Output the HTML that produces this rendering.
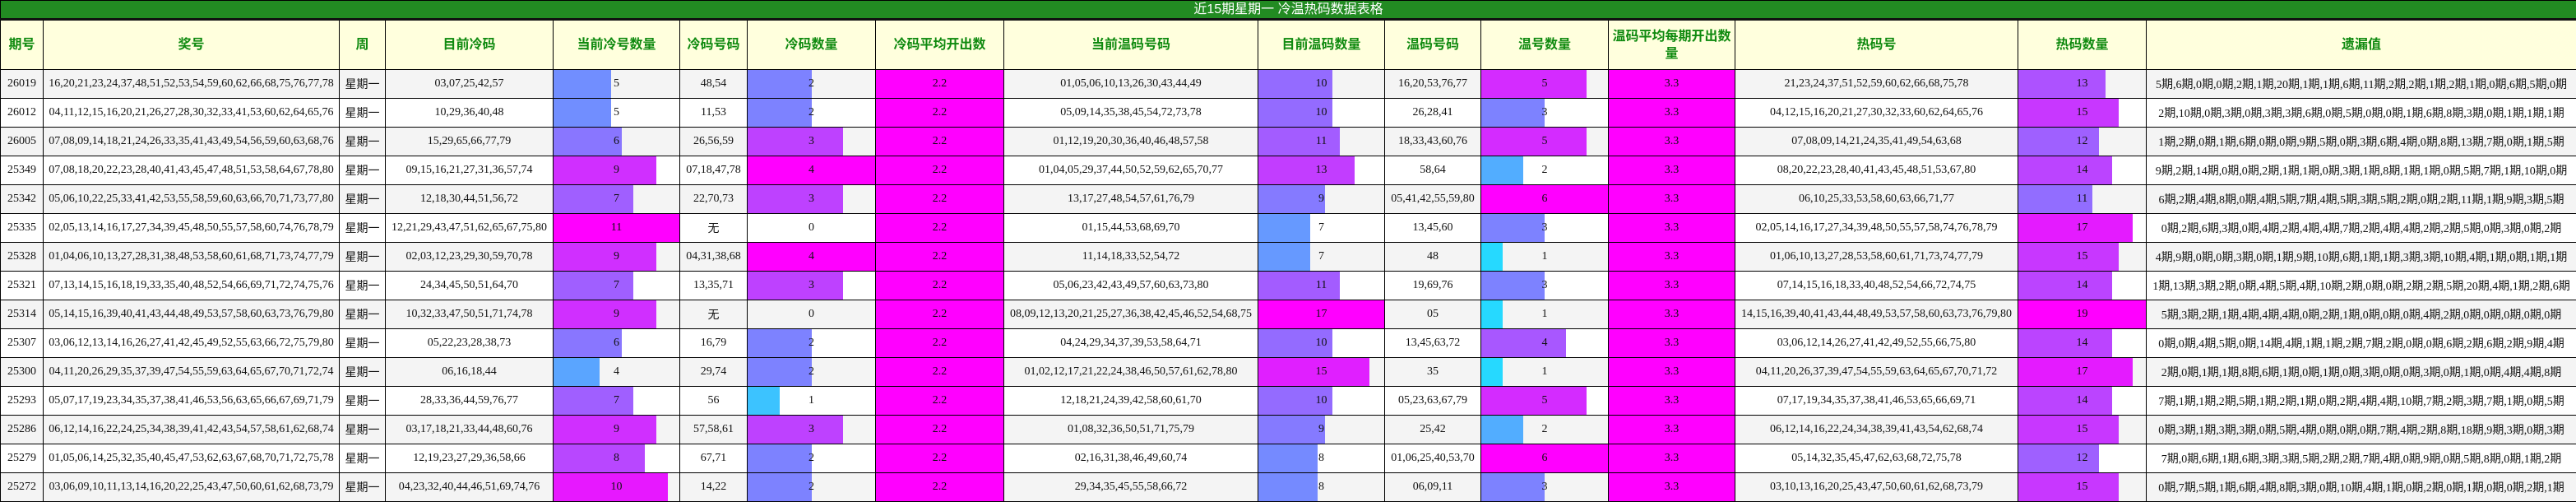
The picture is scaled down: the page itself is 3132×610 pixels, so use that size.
<!DOCTYPE html>
<html><head><meta charset="utf-8">
<style>
html,body{margin:0;padding:0;background:#fff;}
body{width:3132px;height:610px;overflow:hidden;}
table{border-collapse:collapse;table-layout:fixed;width:3132px;font-family:"Liberation Serif","Noto Sans CJK SC",serif;font-size:14px;color:#111;}
td,th{border:1px solid #000;padding:0;text-align:center;white-space:nowrap;overflow:hidden;}
.t td{background:#228b22;color:#fff;height:21px;border-bottom:3px solid #111;font-family:"Liberation Sans","Noto Sans CJK SC",sans-serif;font-size:16px;line-height:21px;}
.h th{background:#ffffdd;color:#0f8a0f;height:59px;font-family:"Liberation Sans","Noto Sans CJK SC",sans-serif;font-size:16px;font-weight:bold;white-space:normal;line-height:21px;}
tr.r td{height:34px;}
tr.r:nth-of-type(odd) td{background:#f4f4f4;}
tr.r:nth-of-type(even) td{background:#fff;}
td.b{position:relative;}
td.b i{position:absolute;left:0;top:0;bottom:0;display:block;}
td.b span{position:relative;}
tr.r td.m{background:#ff00ff;}
</style></head><body>
<table>
<colgroup><col style="width:52px"><col style="width:360px"><col style="width:56px"><col style="width:204px"><col style="width:154px"><col style="width:82px"><col style="width:156px"><col style="width:156px"><col style="width:309px"><col style="width:154px"><col style="width:117px"><col style="width:155px"><col style="width:154px"><col style="width:344px"><col style="width:156px"><col style="width:523px"></colgroup>
<tr class="t"><td colspan="16">近15期星期一 冷温热码数据表格</td></tr>
<tr class="h"><th>期号</th><th>奖号</th><th>周</th><th>目前冷码</th><th>当前冷号数量</th><th>冷码号码</th><th>冷码数量</th><th>冷码平均开出数</th><th>当前温码号码</th><th>目前温码数量</th><th>温码号码</th><th>温号数量</th><th>温码平均每期开出数量</th><th>热码号</th><th>热码数量</th><th>遗漏值</th></tr>

<tr class="r"><td>26019</td><td>16,20,21,23,24,37,48,51,52,53,54,59,60,62,66,68,75,76,77,78</td><td>星期一</td><td>03,07,25,42,57</td><td class="b"><i style="width:45.5%;background:rgb(113,142,255)"></i><span>5</span></td><td>48,54</td><td class="b"><i style="width:50%;background:rgb(125,130,255)"></i><span>2</span></td><td class="m">2.2</td><td>01,05,06,10,13,26,30,43,44,49</td><td class="b"><i style="width:58.8%;background:rgb(148,107,255)"></i><span>10</span></td><td>16,20,53,76,77</td><td class="b"><i style="width:83.3%;background:rgb(212,43,255)"></i><span>5</span></td><td class="m">3.3</td><td>21,23,24,37,51,52,59,60,62,66,68,75,78</td><td class="b"><i style="width:68.4%;background:rgb(173,82,255)"></i><span>13</span></td><td>5期,6期,0期,0期,2期,1期,20期,1期,1期,6期,11期,2期,2期,1期,2期,1期,0期,6期,5期,0期</td></tr>

<tr class="r"><td>26012</td><td>04,11,12,15,16,20,21,26,27,28,30,32,33,41,53,60,62,64,65,76</td><td>星期一</td><td>10,29,36,40,48</td><td class="b"><i style="width:45.5%;background:rgb(113,142,255)"></i><span>5</span></td><td>11,53</td><td class="b"><i style="width:50%;background:rgb(125,130,255)"></i><span>2</span></td><td class="m">2.2</td><td>05,09,14,35,38,45,54,72,73,78</td><td class="b"><i style="width:58.8%;background:rgb(148,107,255)"></i><span>10</span></td><td>26,28,41</td><td class="b"><i style="width:50%;background:rgb(125,130,255)"></i><span>3</span></td><td class="m">3.3</td><td>04,12,15,16,20,21,27,30,32,33,60,62,64,65,76</td><td class="b"><i style="width:78.9%;background:rgb(200,55,255)"></i><span>15</span></td><td>2期,10期,0期,3期,0期,3期,3期,6期,0期,5期,0期,0期,1期,6期,8期,3期,0期,1期,1期,1期</td></tr>

<tr class="r"><td>26005</td><td>07,08,09,14,18,21,24,26,33,35,41,43,49,54,56,59,60,63,68,76</td><td>星期一</td><td>15,29,65,66,77,79</td><td class="b"><i style="width:54.5%;background:rgb(137,118,255)"></i><span>6</span></td><td>26,56,59</td><td class="b"><i style="width:75%;background:rgb(190,65,255)"></i><span>3</span></td><td class="m">2.2</td><td>01,12,19,20,30,36,40,46,48,57,58</td><td class="b"><i style="width:64.7%;background:rgb(163,92,255)"></i><span>11</span></td><td>18,33,43,60,76</td><td class="b"><i style="width:83.3%;background:rgb(212,43,255)"></i><span>5</span></td><td class="m">3.3</td><td>07,08,09,14,21,24,35,41,49,54,63,68</td><td class="b"><i style="width:63.2%;background:rgb(159,96,255)"></i><span>12</span></td><td>1期,2期,0期,1期,6期,0期,0期,9期,5期,0期,3期,6期,4期,0期,8期,13期,7期,0期,1期,5期</td></tr>

<tr class="r"><td>25349</td><td>07,08,18,20,22,23,28,40,41,43,45,47,48,51,53,58,64,67,78,80</td><td>星期一</td><td>09,15,16,21,27,31,36,57,74</td><td class="b"><i style="width:81.8%;background:rgb(208,47,255)"></i><span>9</span></td><td>07,18,47,78</td><td class="b"><i style="width:100%;background:rgb(255,0,255)"></i><span>4</span></td><td class="m">2.2</td><td>01,04,05,29,37,44,50,52,59,62,65,70,77</td><td class="b"><i style="width:76.5%;background:rgb(194,61,255)"></i><span>13</span></td><td>58,64</td><td class="b"><i style="width:33.3%;background:rgb(82,173,255)"></i><span>2</span></td><td class="m">3.3</td><td>08,20,22,23,28,40,41,43,45,48,51,53,67,80</td><td class="b"><i style="width:73.7%;background:rgb(187,68,255)"></i><span>14</span></td><td>9期,2期,14期,0期,0期,2期,1期,1期,0期,3期,1期,8期,1期,1期,0期,5期,7期,1期,10期,0期</td></tr>

<tr class="r"><td>25342</td><td>05,06,10,22,25,33,41,42,53,55,58,59,60,63,66,70,71,73,77,80</td><td>星期一</td><td>12,18,30,44,51,56,72</td><td class="b"><i style="width:63.6%;background:rgb(160,95,255)"></i><span>7</span></td><td>22,70,73</td><td class="b"><i style="width:75%;background:rgb(190,65,255)"></i><span>3</span></td><td class="m">2.2</td><td>13,17,27,48,54,57,61,76,79</td><td class="b"><i style="width:52.9%;background:rgb(133,122,255)"></i><span>9</span></td><td>05,41,42,55,59,80</td><td class="b"><i style="width:100%;background:rgb(255,0,255)"></i><span>6</span></td><td class="m">3.3</td><td>06,10,25,33,53,58,60,63,66,71,77</td><td class="b"><i style="width:57.9%;background:rgb(146,109,255)"></i><span>11</span></td><td>6期,2期,4期,8期,0期,4期,5期,7期,4期,5期,3期,5期,2期,0期,2期,11期,1期,9期,3期,5期</td></tr>

<tr class="r"><td>25335</td><td>02,05,13,14,16,17,27,34,39,45,48,50,55,57,58,60,74,76,78,79</td><td>星期一</td><td>12,21,29,43,47,51,62,65,67,75,80</td><td class="b"><i style="width:100%;background:rgb(255,0,255)"></i><span>11</span></td><td>无</td><td class="b"><span>0</span></td><td class="m">2.2</td><td>01,15,44,53,68,69,70</td><td class="b"><i style="width:41.2%;background:rgb(102,153,255)"></i><span>7</span></td><td>13,45,60</td><td class="b"><i style="width:50%;background:rgb(125,130,255)"></i><span>3</span></td><td class="m">3.3</td><td>02,05,14,16,17,27,34,39,48,50,55,57,58,74,76,78,79</td><td class="b"><i style="width:89.5%;background:rgb(228,27,255)"></i><span>17</span></td><td>0期,2期,6期,3期,0期,4期,2期,4期,4期,7期,2期,4期,4期,2期,2期,5期,0期,3期,0期,2期</td></tr>

<tr class="r"><td>25328</td><td>01,04,06,10,13,27,28,31,38,48,53,58,60,61,68,71,73,74,77,79</td><td>星期一</td><td>02,03,12,23,29,30,59,70,78</td><td class="b"><i style="width:81.8%;background:rgb(208,47,255)"></i><span>9</span></td><td>04,31,38,68</td><td class="b"><i style="width:100%;background:rgb(255,0,255)"></i><span>4</span></td><td class="m">2.2</td><td>11,14,18,33,52,54,72</td><td class="b"><i style="width:41.2%;background:rgb(102,153,255)"></i><span>7</span></td><td>48</td><td class="b"><i style="width:16.7%;background:rgb(38,217,255)"></i><span>1</span></td><td class="m">3.3</td><td>01,06,10,13,27,28,53,58,60,61,71,73,74,77,79</td><td class="b"><i style="width:78.9%;background:rgb(200,55,255)"></i><span>15</span></td><td>4期,9期,0期,0期,3期,0期,1期,9期,10期,6期,1期,1期,3期,3期,10期,4期,1期,0期,1期,1期</td></tr>

<tr class="r"><td>25321</td><td>07,13,14,15,16,18,19,33,35,40,48,52,54,66,69,71,72,74,75,76</td><td>星期一</td><td>24,34,45,50,51,64,70</td><td class="b"><i style="width:63.6%;background:rgb(160,95,255)"></i><span>7</span></td><td>13,35,71</td><td class="b"><i style="width:75%;background:rgb(190,65,255)"></i><span>3</span></td><td class="m">2.2</td><td>05,06,23,42,43,49,57,60,63,73,80</td><td class="b"><i style="width:64.7%;background:rgb(163,92,255)"></i><span>11</span></td><td>19,69,76</td><td class="b"><i style="width:50%;background:rgb(125,130,255)"></i><span>3</span></td><td class="m">3.3</td><td>07,14,15,16,18,33,40,48,52,54,66,72,74,75</td><td class="b"><i style="width:73.7%;background:rgb(187,68,255)"></i><span>14</span></td><td>1期,13期,3期,2期,0期,4期,5期,4期,10期,2期,0期,0期,2期,2期,5期,20期,4期,1期,2期,6期</td></tr>

<tr class="r"><td>25314</td><td>05,14,15,16,39,40,41,43,44,48,49,53,57,58,60,63,73,76,79,80</td><td>星期一</td><td>10,32,33,47,50,51,71,74,78</td><td class="b"><i style="width:81.8%;background:rgb(208,47,255)"></i><span>9</span></td><td>无</td><td class="b"><span>0</span></td><td class="m">2.2</td><td>08,09,12,13,20,21,25,27,36,38,42,45,46,52,54,68,75</td><td class="b"><i style="width:100%;background:rgb(255,0,255)"></i><span>17</span></td><td>05</td><td class="b"><i style="width:16.7%;background:rgb(38,217,255)"></i><span>1</span></td><td class="m">3.3</td><td>14,15,16,39,40,41,43,44,48,49,53,57,58,60,63,73,76,79,80</td><td class="b"><i style="width:100%;background:rgb(255,0,255)"></i><span>19</span></td><td>5期,3期,2期,1期,4期,4期,4期,0期,2期,1期,0期,0期,0期,4期,2期,0期,0期,0期,0期,0期</td></tr>

<tr class="r"><td>25307</td><td>03,06,12,13,14,16,26,27,41,42,45,49,52,55,63,66,72,75,79,80</td><td>星期一</td><td>05,22,23,28,38,73</td><td class="b"><i style="width:54.5%;background:rgb(137,118,255)"></i><span>6</span></td><td>16,79</td><td class="b"><i style="width:50%;background:rgb(125,130,255)"></i><span>2</span></td><td class="m">2.2</td><td>04,24,29,34,37,39,53,58,64,71</td><td class="b"><i style="width:58.8%;background:rgb(148,107,255)"></i><span>10</span></td><td>13,45,63,72</td><td class="b"><i style="width:66.7%;background:rgb(168,87,255)"></i><span>4</span></td><td class="m">3.3</td><td>03,06,12,14,26,27,41,42,49,52,55,66,75,80</td><td class="b"><i style="width:73.7%;background:rgb(187,68,255)"></i><span>14</span></td><td>0期,0期,4期,5期,0期,14期,4期,1期,1期,2期,7期,2期,0期,0期,6期,2期,6期,2期,9期,4期</td></tr>

<tr class="r"><td>25300</td><td>04,11,20,26,29,35,37,39,47,54,55,59,63,64,65,67,70,71,72,74</td><td>星期一</td><td>06,16,18,44</td><td class="b"><i style="width:36.4%;background:rgb(90,165,255)"></i><span>4</span></td><td>29,74</td><td class="b"><i style="width:50%;background:rgb(125,130,255)"></i><span>2</span></td><td class="m">2.2</td><td>01,02,12,17,21,22,24,38,46,50,57,61,62,78,80</td><td class="b"><i style="width:88.2%;background:rgb(224,31,255)"></i><span>15</span></td><td>35</td><td class="b"><i style="width:16.7%;background:rgb(38,217,255)"></i><span>1</span></td><td class="m">3.3</td><td>04,11,20,26,37,39,47,54,55,59,63,64,65,67,70,71,72</td><td class="b"><i style="width:89.5%;background:rgb(228,27,255)"></i><span>17</span></td><td>2期,0期,1期,1期,8期,6期,1期,0期,1期,0期,3期,0期,0期,3期,0期,1期,0期,4期,4期,8期</td></tr>

<tr class="r"><td>25293</td><td>05,07,17,19,23,34,35,37,38,41,46,53,56,63,65,66,67,69,71,79</td><td>星期一</td><td>28,33,36,44,59,76,77</td><td class="b"><i style="width:63.6%;background:rgb(160,95,255)"></i><span>7</span></td><td>56</td><td class="b"><i style="width:25%;background:rgb(60,195,255)"></i><span>1</span></td><td class="m">2.2</td><td>12,18,21,24,39,42,58,60,61,70</td><td class="b"><i style="width:58.8%;background:rgb(148,107,255)"></i><span>10</span></td><td>05,23,63,67,79</td><td class="b"><i style="width:83.3%;background:rgb(212,43,255)"></i><span>5</span></td><td class="m">3.3</td><td>07,17,19,34,35,37,38,41,46,53,65,66,69,71</td><td class="b"><i style="width:73.7%;background:rgb(187,68,255)"></i><span>14</span></td><td>7期,1期,1期,2期,5期,1期,2期,1期,0期,2期,4期,4期,10期,7期,2期,3期,7期,1期,0期,5期</td></tr>

<tr class="r"><td>25286</td><td>06,12,14,16,22,24,25,34,38,39,41,42,43,54,57,58,61,62,68,74</td><td>星期一</td><td>03,17,18,21,33,44,48,60,76</td><td class="b"><i style="width:81.8%;background:rgb(208,47,255)"></i><span>9</span></td><td>57,58,61</td><td class="b"><i style="width:75%;background:rgb(190,65,255)"></i><span>3</span></td><td class="m">2.2</td><td>01,08,32,36,50,51,71,75,79</td><td class="b"><i style="width:52.9%;background:rgb(133,122,255)"></i><span>9</span></td><td>25,42</td><td class="b"><i style="width:33.3%;background:rgb(82,173,255)"></i><span>2</span></td><td class="m">3.3</td><td>06,12,14,16,22,24,34,38,39,41,43,54,62,68,74</td><td class="b"><i style="width:78.9%;background:rgb(200,55,255)"></i><span>15</span></td><td>0期,3期,1期,3期,3期,0期,5期,4期,0期,0期,0期,7期,4期,2期,8期,18期,9期,3期,0期,3期</td></tr>

<tr class="r"><td>25279</td><td>01,05,06,14,25,32,35,40,45,47,53,62,63,67,68,70,71,72,75,78</td><td>星期一</td><td>12,19,23,27,29,36,58,66</td><td class="b"><i style="width:72.7%;background:rgb(184,71,255)"></i><span>8</span></td><td>67,71</td><td class="b"><i style="width:50%;background:rgb(125,130,255)"></i><span>2</span></td><td class="m">2.2</td><td>02,16,31,38,46,49,60,74</td><td class="b"><i style="width:47.1%;background:rgb(117,138,255)"></i><span>8</span></td><td>01,06,25,40,53,70</td><td class="b"><i style="width:100%;background:rgb(255,0,255)"></i><span>6</span></td><td class="m">3.3</td><td>05,14,32,35,45,47,62,63,68,72,75,78</td><td class="b"><i style="width:63.2%;background:rgb(159,96,255)"></i><span>12</span></td><td>7期,0期,6期,1期,6期,3期,3期,5期,2期,2期,7期,4期,0期,9期,0期,5期,8期,0期,1期,2期</td></tr>

<tr class="r"><td>25272</td><td>03,06,09,10,11,13,14,16,20,22,25,43,47,50,60,61,62,68,73,79</td><td>星期一</td><td>04,23,32,40,44,46,51,69,74,76</td><td class="b"><i style="width:90.9%;background:rgb(231,24,255)"></i><span>10</span></td><td>14,22</td><td class="b"><i style="width:50%;background:rgb(125,130,255)"></i><span>2</span></td><td class="m">2.2</td><td>29,34,35,45,55,58,66,72</td><td class="b"><i style="width:47.1%;background:rgb(117,138,255)"></i><span>8</span></td><td>06,09,11</td><td class="b"><i style="width:50%;background:rgb(125,130,255)"></i><span>3</span></td><td class="m">3.3</td><td>03,10,13,16,20,25,43,47,50,60,61,62,68,73,79</td><td class="b"><i style="width:78.9%;background:rgb(200,55,255)"></i><span>15</span></td><td>0期,7期,5期,1期,6期,4期,8期,3期,0期,10期,4期,1期,0期,2期,0期,1期,0期,0期,2期,1期</td></tr>
</table>
</body></html>
